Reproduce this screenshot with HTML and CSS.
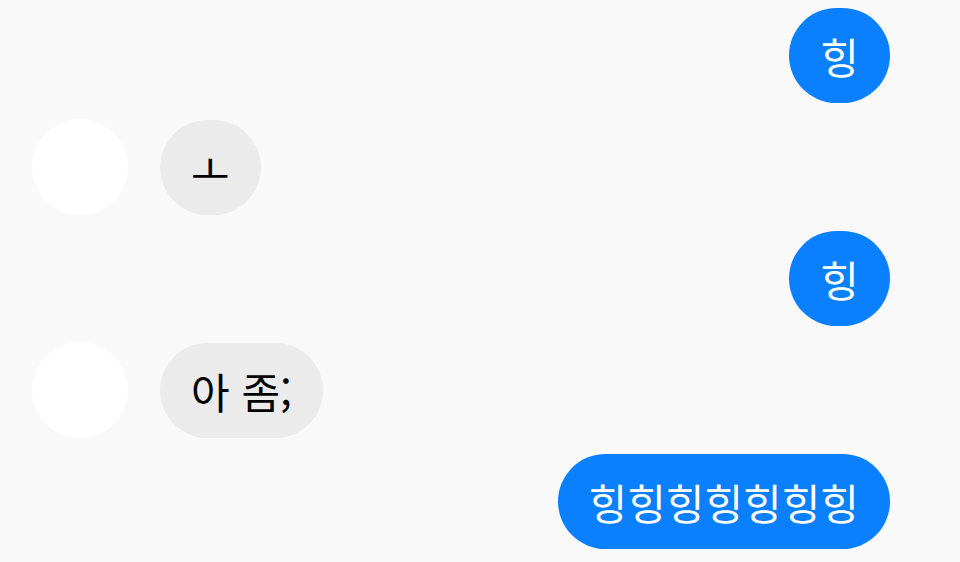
FILE: index.html
```html
<!DOCTYPE html>
<html lang="ko">
<head>
    <meta charset="UTF-8">
    <meta name="viewport" content="width=device-width, initial-scale=1.0">
    <title>채팅</title>
    <link rel="stylesheet" href="styles.css">
</head>
<body>
    <div class="chat">
        <div class="row row-me">
            <div class="bubble bubble-me">힝</div>
        </div>
        <div class="row">
            <div class="avatar"></div>
            <div class="bubble bubble-other">ㅗ</div>
        </div>
        <div class="row row-me">
            <div class="bubble bubble-me">힝</div>
        </div>
        <div class="row">
            <div class="avatar"></div>
            <div class="bubble bubble-other">아 좀;</div>
        </div>
        <div class="row row-me">
            <div class="bubble bubble-me">힝힝힝힝힝힝힝</div>
        </div>
    </div>
</body>
</html>
```

FILE: styles.css
```css
* {
    margin: 0;
    padding: 0;
    box-sizing: border-box;
}

body {
    font-family: "Noto Sans CJK KR", "Noto Sans", sans-serif;
    background-color: #f9f9f9;
    height: 100vh;
    overflow: hidden;
}

.chat {
    display: flex;
    flex-direction: column;
    gap: 16px;
    padding: 8px 70px 0 32px;
}

.row {
    display: flex;
    align-items: center;
    gap: 32px;
}

.row-me {
    justify-content: flex-end;
}

.avatar {
    width: 96px;
    height: 96px;
    border-radius: 50%;
    background: #ffffff;
    flex-shrink: 0;
}

.bubble {
    font-size: 42px;
    line-height: 47px;
    padding: 24px 31px;
    border-radius: 48px;
    white-space: nowrap;
}

.bubble-me {
    background-color: #0a80ff;
    color: #ffffff;
}

.bubble-other {
    background-color: #ebebeb;
    color: #000000;
}
```
